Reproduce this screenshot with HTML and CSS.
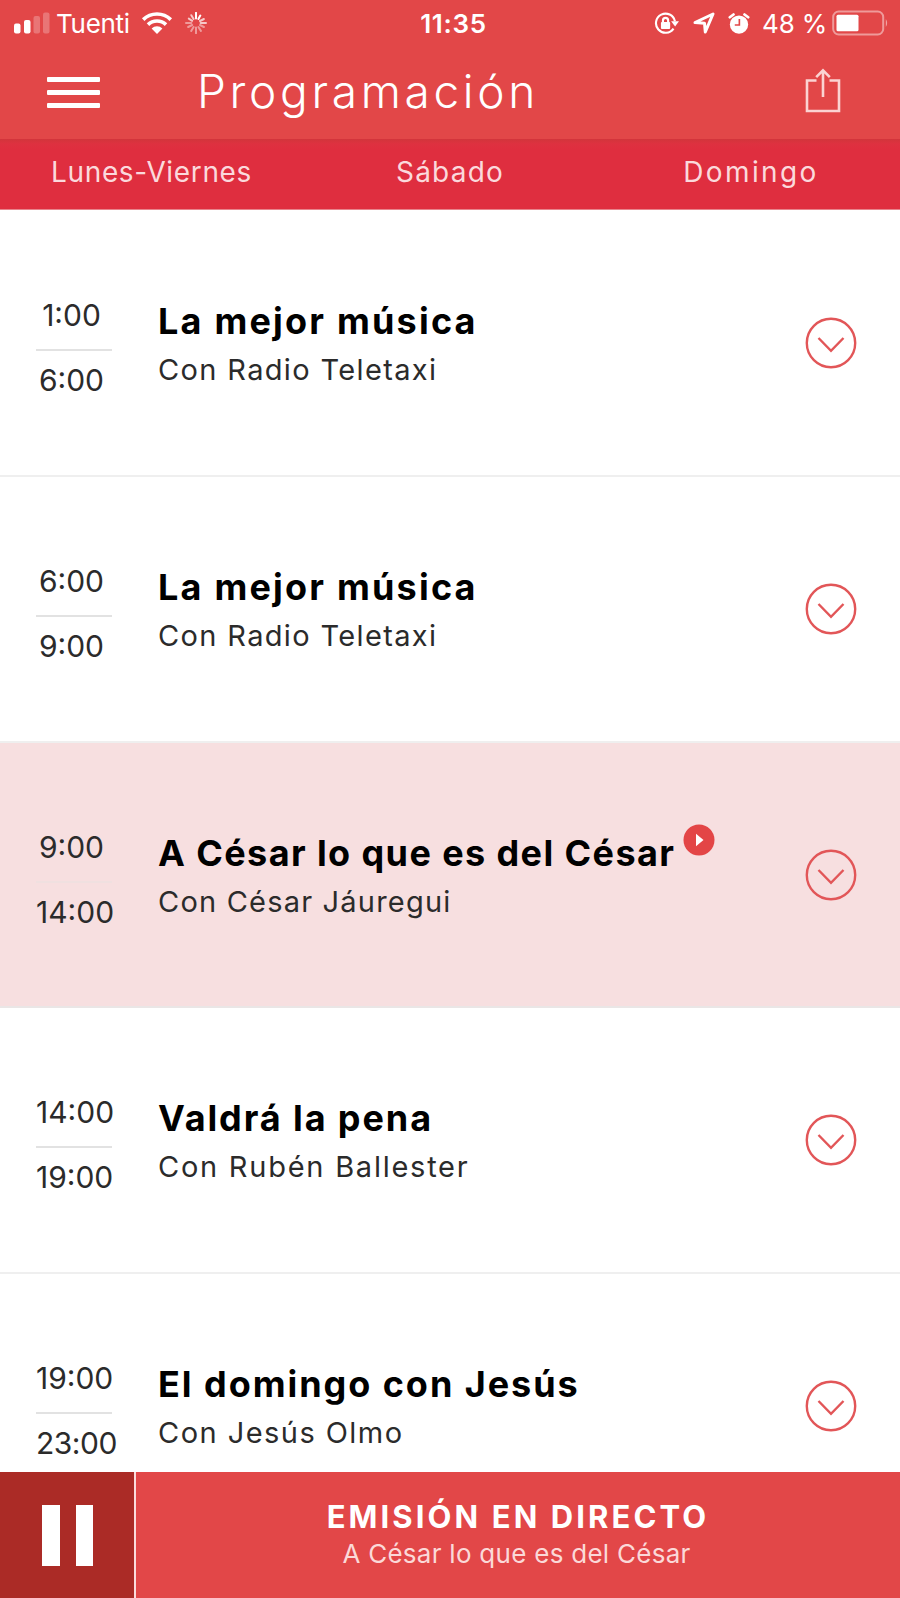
FILE: index.html
```html
<!DOCTYPE html>
<html lang="es">
<head>
    <meta charset="UTF-8">
    <meta name="viewport" content="width=device-width, initial-scale=1.0">
    <title>Programación</title>
    <link rel="stylesheet" href="styles.css">
</head>
<body>

    <!-- Shared chevron -->
    <svg class="defs" width="0" height="0">
        <symbol id="chevron" viewBox="0 0 52 52">
            <circle cx="26" cy="26" r="24.2"/>
            <path d="M13.5 21 L26 33.8 L38.5 21"/>
        </symbol>
    </svg>

    <div class="app">
        <header class="header">
            <div class="status">
                <div class="status-left">
                    <svg class="signal" width="36" height="22" viewBox="0 0 36 22">
                        <rect x="0" y="11.5" width="6.5" height="10" rx="2"/>
                        <rect x="10" y="8" width="6.5" height="13.5" rx="2"/>
                        <rect class="dim" x="19.5" y="4" width="6.5" height="17.5" rx="2"/>
                        <rect class="dim" x="29" y="0.5" width="6.5" height="21" rx="2"/>
                    </svg>
                    <span class="carrier">Tuenti</span>
                    <svg class="wifi" width="32" height="24" viewBox="0 0 32 24">
                        <path class="arc" d="M2.2 8.6 A19.8 19.8 0 0 1 29.8 8.6"/>
                        <path class="arc" d="M7 13.6 A13 13 0 0 1 25 13.6"/>
                        <path d="M16 23 L10.6 17.4 A8 8 0 0 1 21.4 17.4 Z"/>
                    </svg>
                    <svg class="spinner" width="22" height="22" viewBox="0 0 22 22">
                        <path d="M11 .8V6.5M15.3 3.6L13.4 7"/>
                        <path class="s2" d="M18.9 7L15 9M21 11H15.6M3.8 6.6L7.2 8.8M6.3 3.2L8.6 7"/>
                        <path class="s3" d="M18.9 15L15 13M15.9 18.9L13.4 15M11 21.2V15.6M6.2 18.9L8.6 15M3.2 15L7.2 13M1 11H6.4"/>
                    </svg>
                </div>
                <div class="clock">11:35</div>
                <div class="status-right">
                    <svg class="lock" width="25" height="23" viewBox="0 0 26 24">
                        <path class="ring" d="M20.3 17.3 A10 10 0 1 1 21.8 9.6"/>
                        <path d="M17.8 9.6H26L22 15Z"/>
                        <rect x="7.2" y="10.5" width="9.6" height="7.3" rx="1"/>
                        <path class="shackle" d="M9.3 11V8.8a2.7 2.7 0 0 1 5.4 0V11"/>
                    </svg>
                    <svg class="arrow" width="22" height="22" viewBox="0 0 22 22">
                        <path d="M2 10.5 L20 2 L12.3 20 L11.5 11.2 Z"/>
                    </svg>
                    <svg class="alarm" width="22" height="23" viewBox="0 0 24 24">
                        <circle cx="12" cy="13.2" r="10"/>
                        <path class="bell" d="M2 5.2L6 2.2M22 5.2L18 2.2"/>
                        <path class="hands" d="M12.4 7V13.6H7.4"/>
                    </svg>
                    <span class="percent">48 %</span>
                    <svg class="battery" width="57" height="26" viewBox="0 0 57 26">
                        <rect class="case" x="1.2" y="1.5" width="50" height="23" rx="5.5"/>
                        <rect x="4.5" y="4.8" width="22" height="16.5" rx="1.5"/>
                        <path class="tip" d="M53.8 9 Q56.5 13 53.8 17 Z"/>
                    </svg>
                </div>
            </div>

            <div class="nav">
                <div class="menu"><i></i><i></i><i></i></div>
                <h1>Programación</h1>
                <svg class="share" width="36" height="46" viewBox="0 0 36 46">
                    <path d="M11.5 12.5H2V43H34V12.5H24.5"/>
                    <path d="M18 29V3M11.2 9.2L18 2.4L24.8 9.2"/>
                </svg>
            </div>
        </header>

        <nav class="tabs">
            <span class="tab t1">Lunes-Viernes</span>
            <span class="tab t2">Sábado</span>
            <span class="tab t3">Domingo</span>
        </nav>

        <main class="list">
            <div class="row">
                <div class="times"><span class="short">1:00</span><span class="short">6:00</span></div>
                <div class="info">
                    <h2 class="n1">La mejor música</h2>
                    <p class="p1">Con Radio Teletaxi</p>
                </div>
                <svg class="more"><use href="#chevron"/></svg>
            </div>
            <div class="row">
                <div class="times"><span class="short">6:00</span><span class="short">9:00</span></div>
                <div class="info">
                    <h2 class="n1">La mejor música</h2>
                    <p class="p1">Con Radio Teletaxi</p>
                </div>
                <svg class="more"><use href="#chevron"/></svg>
            </div>
            <div class="row active">
                <div class="times"><span class="short">9:00</span><span>14:00</span></div>
                <div class="info">
                    <h2 class="n3">A César lo que es del César
                        <svg class="live" width="32" height="32" viewBox="0 0 32 32">
                            <circle cx="16" cy="16" r="15.5"/>
                            <path d="M13 9.8L20.5 16L13 22.2Z"/>
                        </svg>
                    </h2>
                    <p class="p3">Con César Jáuregui</p>
                </div>
                <svg class="more"><use href="#chevron"/></svg>
            </div>
            <div class="row">
                <div class="times"><span>14:00</span><span>19:00</span></div>
                <div class="info">
                    <h2 class="n4">Valdrá la pena</h2>
                    <p class="p4">Con Rubén Ballester</p>
                </div>
                <svg class="more"><use href="#chevron"/></svg>
            </div>
            <div class="row">
                <div class="times"><span>19:00</span><span class="long">23:00</span></div>
                <div class="info">
                    <h2 class="n5">El domingo con Jesús</h2>
                    <p class="p5">Con Jesús Olmo</p>
                </div>
                <svg class="more"><use href="#chevron"/></svg>
            </div>
        </main>

        <footer class="player">
            <div class="pause"><i></i><i></i></div>
            <div class="now">
                <strong>EMISIÓN EN DIRECTO</strong>
                <span>A César lo que es del César</span>
            </div>
        </footer>
    </div>

</body>
</html>
```
FILE: styles.css
```css
* {
    box-sizing: border-box;
}
body {
    margin: 0;
    font-family: Inter, sans-serif;
    background-color: #fff;
    color: #000;
}
h1, h2, p {
    margin: 0;
    font-weight: 400;
}
svg {
    display: block;
    flex: none;
}
.defs {
    position: absolute;
}
.app {
    width: 900px;
    height: 1598px;
    display: flex;
    flex-direction: column;
    overflow: hidden;
}

/* Header */
.header {
    height: 139px;
    flex: none;
    background-color: #e24748;
    color: #fff;
}
.status {
    height: 46px;
    display: grid;
    grid-template-columns: 1fr auto 1fr;
    align-items: center;
    padding: 0 11px 0 14px;
    font-size: 26px;
    line-height: 32px;
    fill: #fff;
}
.status-left, .status-right {
    display: flex;
    align-items: center;
}
.status-right {
    justify-content: flex-end;
}
.dim {
    opacity: 0.25;
}
.carrier {
    margin: 1px 11px 0 6px;
    letter-spacing: -0.3px;
}
.arc {
    fill: none;
    stroke: #fff;
    stroke-width: 3.6;
}
.spinner {
    margin-left: 12px;
    stroke: #fff;
    stroke-width: 2;
    stroke-linecap: round;
}
.s2 {
    opacity: 0.7;
}
.s3 {
    opacity: 0.45;
}
.clock {
    font-weight: 600;
    margin: 1px 0 0 4px;
    letter-spacing: 0.7px;
}
.ring, .shackle {
    fill: none;
    stroke: #fff;
    stroke-width: 2.2;
}
.arrow {
    margin-left: 14px;
}
.arrow path {
    fill: none;
    stroke: #fff;
    stroke-width: 3;
    stroke-linejoin: round;
}
.alarm {
    margin-left: 13px;
}
.bell {
    stroke: #fff;
    stroke-width: 3;
    stroke-linecap: round;
}
.hands {
    fill: none;
    stroke: #e24748;
    stroke-width: 1.8;
}
.percent {
    margin: 1px 5px 0 12px;
    letter-spacing: -0.2px;
}
.case {
    fill: none;
    stroke: #fff;
    stroke-width: 2;
    opacity: 0.45;
}
.tip {
    opacity: 0.5;
}
.nav {
    height: 93px;
    display: flex;
    align-items: center;
    padding: 0 59px 3px 47px;
}
.menu {
    width: 53px;
    display: flex;
    flex-direction: column;
    gap: 8px;
    margin-top: 3px;
}
.menu i {
    height: 5.2px;
    border-radius: 1px;
    background-color: #fff;
}
.nav h1 {
    flex: 1;
    margin-left: 97px;
    font-size: 46px;
    line-height: 54px;
    font-weight: 300;
    letter-spacing: 3.7px;
}
.share {
    fill: none;
    stroke: #fbd3d2;
    stroke-width: 2.6;
}

/* Day tabs */
.tabs {
    height: 71px;
    flex: none;
    display: grid;
    grid-template-columns: repeat(3, 1fr);
    background: linear-gradient(#d2353b, #de3140 5px, #df2e3f 10px);
    border-bottom: 1px solid #e8848c;
    color: #fbd9dc;
    text-align: center;
    font-size: 28px;
    line-height: 66px;
}
.tab {
    letter-spacing: 1.2px;
}
.t1 {
    padding-left: 3px;
    letter-spacing: 0.65px;
}
.t3 {
    padding-left: 2px;
    letter-spacing: 2.4px;
}

/* Programme list */
.list {
    flex: 1;
    min-height: 0;
    padding-top: 1px;
    overflow: hidden;
}
.row {
    height: 265.8px;
    display: flex;
    padding: 86px 43px 0 36px;
    border-bottom: 2.5px solid #efefef;
}
.active {
    background-color: #f7dfe0;
    border-bottom-color: #eae6e6;
}
.times {
    width: 76px;
    display: flex;
    flex-direction: column;
    font-size: 30px;
    line-height: 36px;
    color: #2b2b2b;
    text-align: center;
    white-space: nowrap;
}
.times span + span {
    margin-top: 16px;
    padding-top: 11px;
    border-top: 2px solid #e2e2e2;
}
.active .times span + span {
    border-color: #f0e0e0;
}
.short {
    text-indent: -5px;
}
.long {
    letter-spacing: -0.5px;
}
.info {
    flex: 1;
    margin: 3px 0 0 46px;
    white-space: nowrap;
}
.info h2 {
    display: flex;
    font-size: 36px;
    line-height: 42px;
    font-weight: 700;
}
.info p {
    margin-top: 10px;
    font-size: 29px;
    line-height: 36px;
    color: #2b2b2b;
}
.info .n1 {
    letter-spacing: 2.2px;
}
.info .n3 {
    letter-spacing: 1.4px;
}
.info .n4 {
    letter-spacing: 1.9px;
}
.info .n5 {
    letter-spacing: 1.95px;
}
.p1 {
    letter-spacing: 1.35px;
}
.p3 {
    letter-spacing: 1.2px;
}
.p4 {
    letter-spacing: 1.75px;
}
.p5 {
    letter-spacing: 1.45px;
}
.live {
    margin: -8px 0 0 8px;
    fill: #e34546;
}
.live path {
    fill: #fff;
}
.more {
    width: 52px;
    height: 52px;
    margin: 20px 0 0;
    fill: none;
    stroke: #e25658;
    stroke-width: 2.4;
}

/* Live player */
.player {
    height: 126px;
    flex: none;
    display: flex;
    background-color: #e24748;
    color: #fff;
}
.pause {
    width: 136px;
    display: flex;
    gap: 16px;
    padding: 33px 0 0 42px;
    background-color: #ab2b26;
    border-right: 2px solid #fbdcdc;
}
.pause i {
    width: 17.5px;
    height: 61px;
    background-color: #fff;
}
.now {
    flex: 1;
    display: flex;
    flex-direction: column;
    align-items: center;
    padding-top: 27px;
    white-space: nowrap;
}
.now strong {
    font-size: 31px;
    line-height: 36px;
    letter-spacing: 3.1px;
}
.now span {
    margin: 3px 3px 0 0;
    font-size: 26px;
    line-height: 32px;
    letter-spacing: 0.27px;
    color: #fbd9d8;
}
```
